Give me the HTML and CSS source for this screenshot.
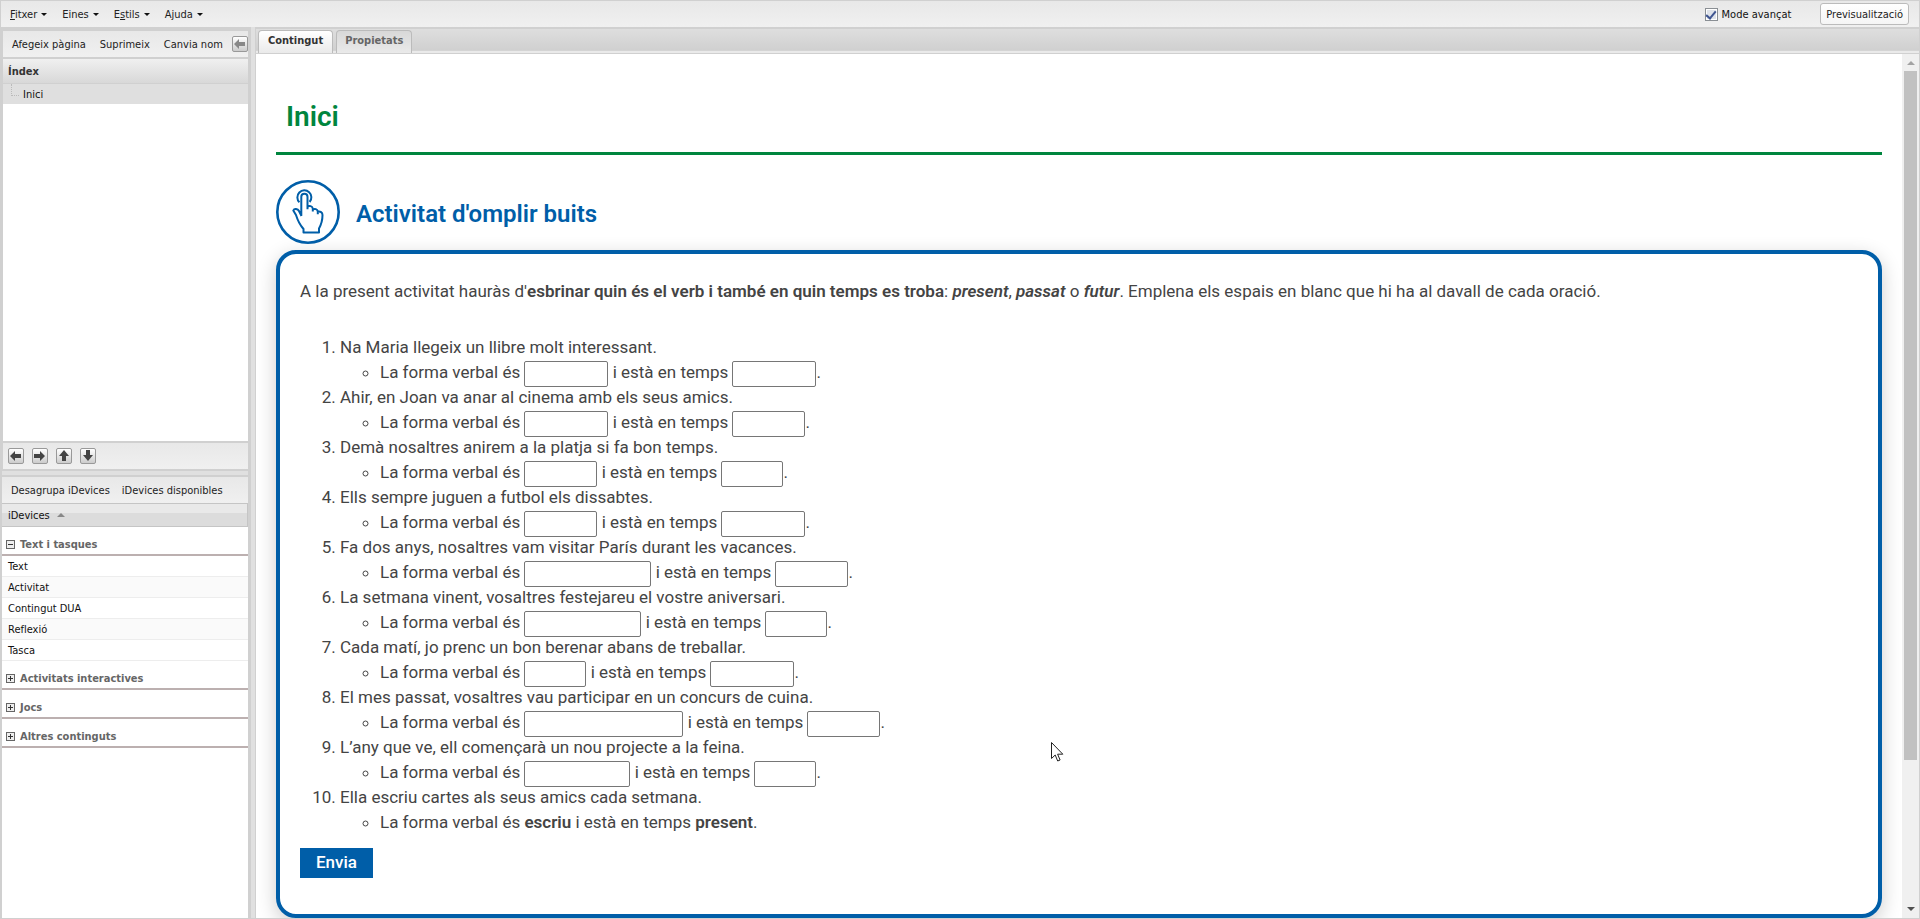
FILE: index.html
```html
<!DOCTYPE html>
<html lang="ca">
<head>
    <meta charset="UTF-8">
    <meta name="viewport" content="width=device-width, initial-scale=1.0">
    <title>Inici</title>
    <link rel="stylesheet" href="styles.css">
</head>
<body>

    <!-- Main menu -->
    <header class="menubar">
        <nav class="menu">
            <button type="button" class="menu-item"><u>F</u>itxer</button>
            <button type="button" class="menu-item">Eines</button>
            <button type="button" class="menu-item">E<u>s</u>tils</button>
            <button type="button" class="menu-item">Ajuda</button>
        </nav>
        <div class="menu-right">
            <label class="advanced"><input type="checkbox" class="advanced-check" checked>Mode avançat</label>
            <button type="button" class="preview-button">Previsualització</button>
        </div>
    </header>

    <div class="workspace">

        <aside class="sidebar">
            <!-- Page tree -->
            <section class="outline">
                <div class="toolbar outline-actions">
                    <button type="button" class="tool">Afegeix pàgina</button>
                    <button type="button" class="tool">Suprimeix</button>
                    <button type="button" class="tool">Canvia nom</button>
                    <button type="button" class="icon-button muted" aria-label="Amaga">
                        <svg width="12" height="10" viewBox="0 0 12 10"><path d="M0 5 5 0v3h6v4H5v3z"/></svg>
                    </button>
                </div>
                <h2 class="outline-title">Índex</h2>
                <ul class="tree">
                    <li class="tree-node">Inici</li>
                </ul>
                <div class="toolbar outline-move">
                    <button type="button" class="icon-button" aria-label="Esquerra">
                        <svg width="12" height="10" viewBox="0 0 12 10"><path d="M0 5 5 0v3h6v4H5v3z"/></svg>
                    </button>
                    <button type="button" class="icon-button" aria-label="Dreta">
                        <svg width="12" height="10" viewBox="0 0 12 10"><path d="M11 5 6 0v3H0v4h6v3z"/></svg>
                    </button>
                    <button type="button" class="icon-button" aria-label="Amunt">
                        <svg width="10" height="12" viewBox="0 0 10 12"><path d="M5 0 0 6h3v5h4V6h3z"/></svg>
                    </button>
                    <button type="button" class="icon-button" aria-label="Avall">
                        <svg width="10" height="12" viewBox="0 0 10 12"><path d="M5 11 0 5h3V0h4v5h3z"/></svg>
                    </button>
                </div>
            </section>

            <!-- iDevices -->
            <section class="devices">
                <div class="toolbar">
                    <button type="button" class="tool">Desagrupa iDevices</button>
                    <button type="button" class="tool">iDevices disponibles</button>
                </div>
                <div class="devices-head">iDevices</div>
                <h3 class="group open">Text i tasques</h3>
                <ul class="device-list">
                    <li>Text</li>
                    <li>Activitat</li>
                    <li>Contingut DUA</li>
                    <li>Reflexió</li>
                    <li>Tasca</li>
                </ul>
                <h3 class="group">Activitats interactives</h3>
                <h3 class="group">Jocs</h3>
                <h3 class="group">Altres continguts</h3>
            </section>
        </aside>

        <main class="main">
            <div class="tabs">
                <button type="button" class="tab active">Contingut</button>
                <button type="button" class="tab">Propietats</button>
            </div>
            <div class="viewport">
                <article class="page">
                    <h1 class="page-title">Inici</h1>

                    <div class="activity-head">
                        <svg class="activity-icon" width="64" height="64" viewBox="0 0 64 64">
                            <circle cx="32" cy="32" r="30.7" stroke-width="2.6"/>
                            <path d="M23.4 22.3a7 7 0 1 1 10.2-.3"/>
                            <path d="M25.3 36V16.8a3.1 3.1 0 0 1 6.2 0v12.4M31.5 29v-2.2c1.500-1.600 5-.8 5.300 1.800v2.900M36.800 29.600c1.700-1.400 4.700-.4 5 1.900v2.700M41.800 31.700c2.500-.6 4.700.8 4.700 3.300 0 6.500-1 9-3.500 13.500v4H27.500v-3.500C24 45 22 41.500 20 35l-2.700-4.500c1-2.500 4.500-1.700 5.700.5l2.500 5"/>
                        </svg>
                        <h2 class="activity-title">Activitat d'omplir buits</h2>
                    </div>

                    <form class="activity">
                        <p class="intro">A la present activitat hauràs d'<strong>esbrinar quin és el verb i també en quin temps es troba</strong>: <strong><em>present</em></strong>, <strong><em>passat</em></strong> o <strong><em>futur</em></strong>. Emplena els espais en blanc que hi ha al davall de cada oració.</p>
                        <ol class="sentences">
                            <li>Na Maria llegeix un llibre molt interessant.
                                <ul><li>La forma verbal és <input type="text" class="blank len-6" aria-label="Verb 1"> i està en temps <input type="text" class="blank len-6" aria-label="Temps 1">.</li></ul>
                            </li>
                            <li>Ahir, en Joan va anar al cinema amb els seus amics.
                                <ul><li>La forma verbal és <input type="text" class="blank len-6" aria-label="Verb 2"> i està en temps <input type="text" class="blank len-5" aria-label="Temps 2">.</li></ul>
                            </li>
                            <li>Demà nosaltres anirem a la platja si fa bon temps.
                                <ul><li>La forma verbal és <input type="text" class="blank len-5" aria-label="Verb 3"> i està en temps <input type="text" class="blank len-4" aria-label="Temps 3">.</li></ul>
                            </li>
                            <li>Ells sempre juguen a futbol els dissabtes.
                                <ul><li>La forma verbal és <input type="text" class="blank len-5" aria-label="Verb 4"> i està en temps <input type="text" class="blank len-6" aria-label="Temps 4">.</li></ul>
                            </li>
                            <li>Fa dos anys, nosaltres vam visitar París durant les vacances.
                                <ul><li>La forma verbal és <input type="text" class="blank len-10" aria-label="Verb 5"> i està en temps <input type="text" class="blank len-5" aria-label="Temps 5">.</li></ul>
                            </li>
                            <li>La setmana vinent, vosaltres festejareu el vostre aniversari.
                                <ul><li>La forma verbal és <input type="text" class="blank len-9" aria-label="Verb 6"> i està en temps <input type="text" class="blank len-4" aria-label="Temps 6">.</li></ul>
                            </li>
                            <li>Cada matí, jo prenc un bon berenar abans de treballar.
                                <ul><li>La forma verbal és <input type="text" class="blank len-4" aria-label="Verb 7"> i està en temps <input type="text" class="blank len-6" aria-label="Temps 7">.</li></ul>
                            </li>
                            <li>El mes passat, vosaltres vau participar en un concurs de cuina.
                                <ul><li>La forma verbal és <input type="text" class="blank len-13" aria-label="Verb 8"> i està en temps <input type="text" class="blank len-5" aria-label="Temps 8">.</li></ul>
                            </li>
                            <li>L’any que ve, ell començarà un nou projecte a la feina.
                                <ul><li>La forma verbal és <input type="text" class="blank len-8" aria-label="Verb 9"> i està en temps <input type="text" class="blank len-4" aria-label="Temps 9">.</li></ul>
                            </li>
                            <li>Ella escriu cartes als seus amics cada setmana.
                                <ul><li>La forma verbal és <strong>escriu</strong> i està en temps <strong>present</strong>.</li></ul>
                            </li>
                        </ol>
                        <button type="button" class="send-button">Envia</button>
                    </form>
                </article>
                <div class="scrollbar">
                    <span class="arrow-up"></span>
                    <span class="thumb"></span>
                    <span class="arrow-down"></span>
                </div>
            </div>
        </main>
    </div>

    <svg class="pointer" width="13" height="20" viewBox="0 0 13 20"><path d="M.5.500v16l3.700-3.500 2.500 6 2.400-1-2.500-5.800h5.200z"/></svg>

</body>
</html>
```

FILE: styles.css
```css
* {
    box-sizing: border-box;
}
body {
    margin: 0;
    height: 100vh;
    display: flex;
    flex-direction: column;
    overflow: hidden;
    border: 1px solid #d0d0d0;
    background: #d0d0d0;
    color: #111;
    font-family: "DejaVu Sans Condensed", "Noto Sans", sans-serif;
    font-size: 11px;
}
h1, h2, h3, p, ul, ol {
    margin: 0;
    padding: 0;
}
button {
    font: inherit;
    color: #222;
    background: none;
    border: none;
    padding: 0;
    white-space: nowrap;
}

/* Menu */
.menubar {
    display: flex;
    justify-content: space-between;
    align-items: center;
    height: 26px;
    flex: none;
    padding: 0 10px 0 9px;
    background: linear-gradient(#e8e8e8, #f0f0f0);
}
.menu {
    display: flex;
    gap: 15px;
}
.menu-item::after {
    content: "";
    display: inline-block;
    margin-left: 4px;
    vertical-align: 2px;
    border: 3px solid transparent;
    border-top-color: #111;
    border-bottom: none;
}
.menu-right {
    display: flex;
    align-items: center;
    gap: 29px;
}
.advanced {
    display: flex;
    align-items: center;
    gap: 4px;
}
.advanced-check {
    appearance: none;
    width: 13px;
    height: 13px;
    margin: 0;
    border: 1px solid #8a8f94;
    background: #dfe3ea;
    box-shadow: inset 0 0 0 1px #fff;
    display: grid;
    place-items: center;
}
.advanced-check:checked::after {
    content: "";
    width: 4px;
    height: 8px;
    border: solid #3f5591;
    border-width: 0 2px 2px 0;
    transform: rotate(40deg);
}
.preview-button {
    height: 22px;
    padding: 0 5px;
    border: 1px solid #bbb;
    border-radius: 3px;
    background: linear-gradient(#fff, #f5f5f5);
}

.workspace {
    flex: 1;
    display: flex;
    min-height: 0;
}

/* Left column */
.sidebar {
    width: 250px;
    flex: none;
    display: flex;
    flex-direction: column;
    padding: 4px 2px 0 1px;
    border-right: 1px solid #d0d0d0;
}
.toolbar {
    display: flex;
    align-items: center;
    gap: 14px;
    height: 26px;
    flex: none;
    padding: 0 9px;
    overflow: hidden;
    background: linear-gradient(#e8e8e8, #f0f0f0);
}
.outline {
    display: flex;
    flex-direction: column;
    flex: 438 1 0;
    margin-left: 1px;
}
.outline-actions .icon-button {
    margin-left: -5px;
}
.outline-title {
    height: 25px;
    margin-top: 2px;
    padding-left: 5px;
    font-size: 11px;
    line-height: 25px;
    color: #333;
    border-bottom: 1px solid #d0d0d0;
    background: linear-gradient(#f0f0f0, #d8d8d8);
}
.tree {
    flex: 1;
    background: #fff;
    list-style: none;
}
.tree-node {
    display: flex;
    gap: 4px;
    height: 20px;
    padding-left: 8px;
    line-height: 21px;
    background: #dfdfdf;
}
.tree-node::before {
    content: "";
    width: 7px;
    height: 11px;
    border: 1px dotted #bbb;
    border-width: 0 0 1px 1px;
}
.outline-move {
    gap: 8px;
    margin-top: 2px;
    padding: 0 5px;
}
.icon-button {
    display: grid;
    place-items: center;
    flex: none;
    width: 16px;
    height: 16px;
    border: 1px solid #999;
    border-radius: 2px;
    background: linear-gradient(#fff, #ccc);
}
.icon-button svg {
    fill: #444;
}
.icon-button.muted svg {
    fill: #888;
}

.devices {
    flex: 441 1 0;
    margin-top: 8px;
    background: #fff;
    box-shadow: 0 -2px #d0d0d0, 0 -6px #e0e0e0;
}
.devices .toolbar {
    gap: 12px;
}
.devices-head {
    display: flex;
    align-items: center;
    gap: 7px;
    height: 24px;
    padding-left: 6px;
    border: solid #c5c5c5;
    border-width: 1px 1px 1px 0;
    background: linear-gradient(#e9e9e9 40%, #dcdcdc 40%);
}
.devices-head::after {
    content: "";
    border: 4px solid transparent;
    border-bottom-color: #888;
    border-top: none;
}
.group {
    display: flex;
    align-items: center;
    gap: 5px;
    height: 29px;
    padding: 7px 4px 0;
    font-size: 11px;
    color: #666;
    border-bottom: 2px solid #bcb0b0;
}
.group::before {
    content: "";
    box-sizing: border-box;
    width: 9px;
    height: 9px;
    border: 1px solid #666;
    background: linear-gradient(#333, #333) center / 5px 1px no-repeat,
        linear-gradient(#333, #333) center / 1px 5px no-repeat, #eee;
}
.group.open::before {
    background: linear-gradient(#333, #333) center / 5px 1px no-repeat, #eee;
}
.device-list {
    list-style: none;
}
.device-list li {
    height: 21px;
    padding-left: 6px;
    line-height: 21px;
    border-bottom: 1px solid #ededed;
}
.device-list li:nth-child(even) {
    background: #fafafa;
}

/* Editing area */
.main {
    flex: 1;
    min-width: 0;
    display: flex;
    flex-direction: column;
    padding-top: 2px;
    border-left: 4px solid #e0e0e0;
}
.tabs {
    display: flex;
    align-items: flex-end;
    gap: 3px;
    height: 25px;
    flex: none;
    padding: 0 2px;
    border: 1px solid #d0d0d0;
    border-width: 0 0 1px 1px;
    background: linear-gradient(#dedede, #d0d0d0 21px, #bebebe 21px, #eaeaea 22px);
}
.tab {
    height: 23px;
    padding: 0 8px 3px;
    border: 1px solid #bbb;
    border-bottom: none;
    border-radius: 4px 4px 0 0;
    background: linear-gradient(#d8d8d8, #eaeaea);
    color: #666;
    font-weight: bold;
}
.tab.active {
    padding: 0 9px 3px;
    color: #333;
    background: linear-gradient(#fff, #eaeaea);
}
.viewport {
    flex: 1;
    display: flex;
    min-height: 0;
    border-left: 1px solid #d0d0d0;
    background: #fff;
}
.page {
    flex: 1;
    padding: 0 20px;
    overflow: hidden;
    color: #444;
    font-family: Roboto, "Liberation Sans", sans-serif;
    font-size: 17px;
    line-height: 25px;
}
.page strong {
    font-weight: 600;
}
.page-title {
    padding: 47px 10px 19px;
    border-bottom: 3px solid #00853e;
    color: #00853e;
    font-size: 28px;
    font-weight: 600;
    line-height: 32px;
}
.activity-head {
    display: flex;
    align-items: center;
    gap: 16px;
    margin: 25px 0 6px;
}
.activity-icon {
    fill: none;
    stroke: #005ea8;
    stroke-width: 2;
    stroke-linejoin: round;
}
.activity-title {
    padding-top: 4px;
    color: #005ea8;
    font-size: 24px;
    font-weight: 600;
}
.activity {
    padding: 25px 20px 36px;
    border: 4px solid #005ea8;
    border-radius: 20px;
    box-shadow: 0 6px 20px rgba(0, 0, 0, 0.2);
}
.sentences {
    margin-top: 31px;
    padding-left: 40px;
}
.sentences ul {
    padding-left: 40px;
    list-style: circle;
}
.blank {
    height: 26px;
    margin: -2px 0;
    padding: 1px 2px;
    border: 1px solid #767676;
    border-radius: 2px;
    font: inherit;
    vertical-align: middle;
}
.len-4 { width: 62px; }
.len-5 { width: 73px; }
.len-6 { width: 84px; }
.len-8 { width: 106px; }
.len-9 { width: 117px; }
.len-10 { width: 127px; }
.len-13 { width: 159px; }
.send-button {
    display: block;
    height: 30px;
    margin-top: 13px;
    padding: 0 16px 2px;
    background: #005ea8;
    color: #fff;
    font-weight: 500;
}

.scrollbar {
    display: flex;
    flex-direction: column;
    align-items: center;
    width: 17px;
    padding: 7px 0;
    background: #f0f0f0;
}
.arrow-up, .arrow-down {
    border: 4px solid transparent;
}
.arrow-up {
    border-top: none;
    border-bottom-color: #a3a3a3;
}
.arrow-down {
    margin-top: auto;
    border-bottom: none;
    border-top-color: #505050;
}
.thumb {
    width: 13px;
    height: 81%;
    margin-top: 6px;
    background: #c1c1c1;
}

.pointer {
    position: absolute;
    left: 1051px;
    top: 742px;
    fill: #fff;
    stroke: #222;
}
```
